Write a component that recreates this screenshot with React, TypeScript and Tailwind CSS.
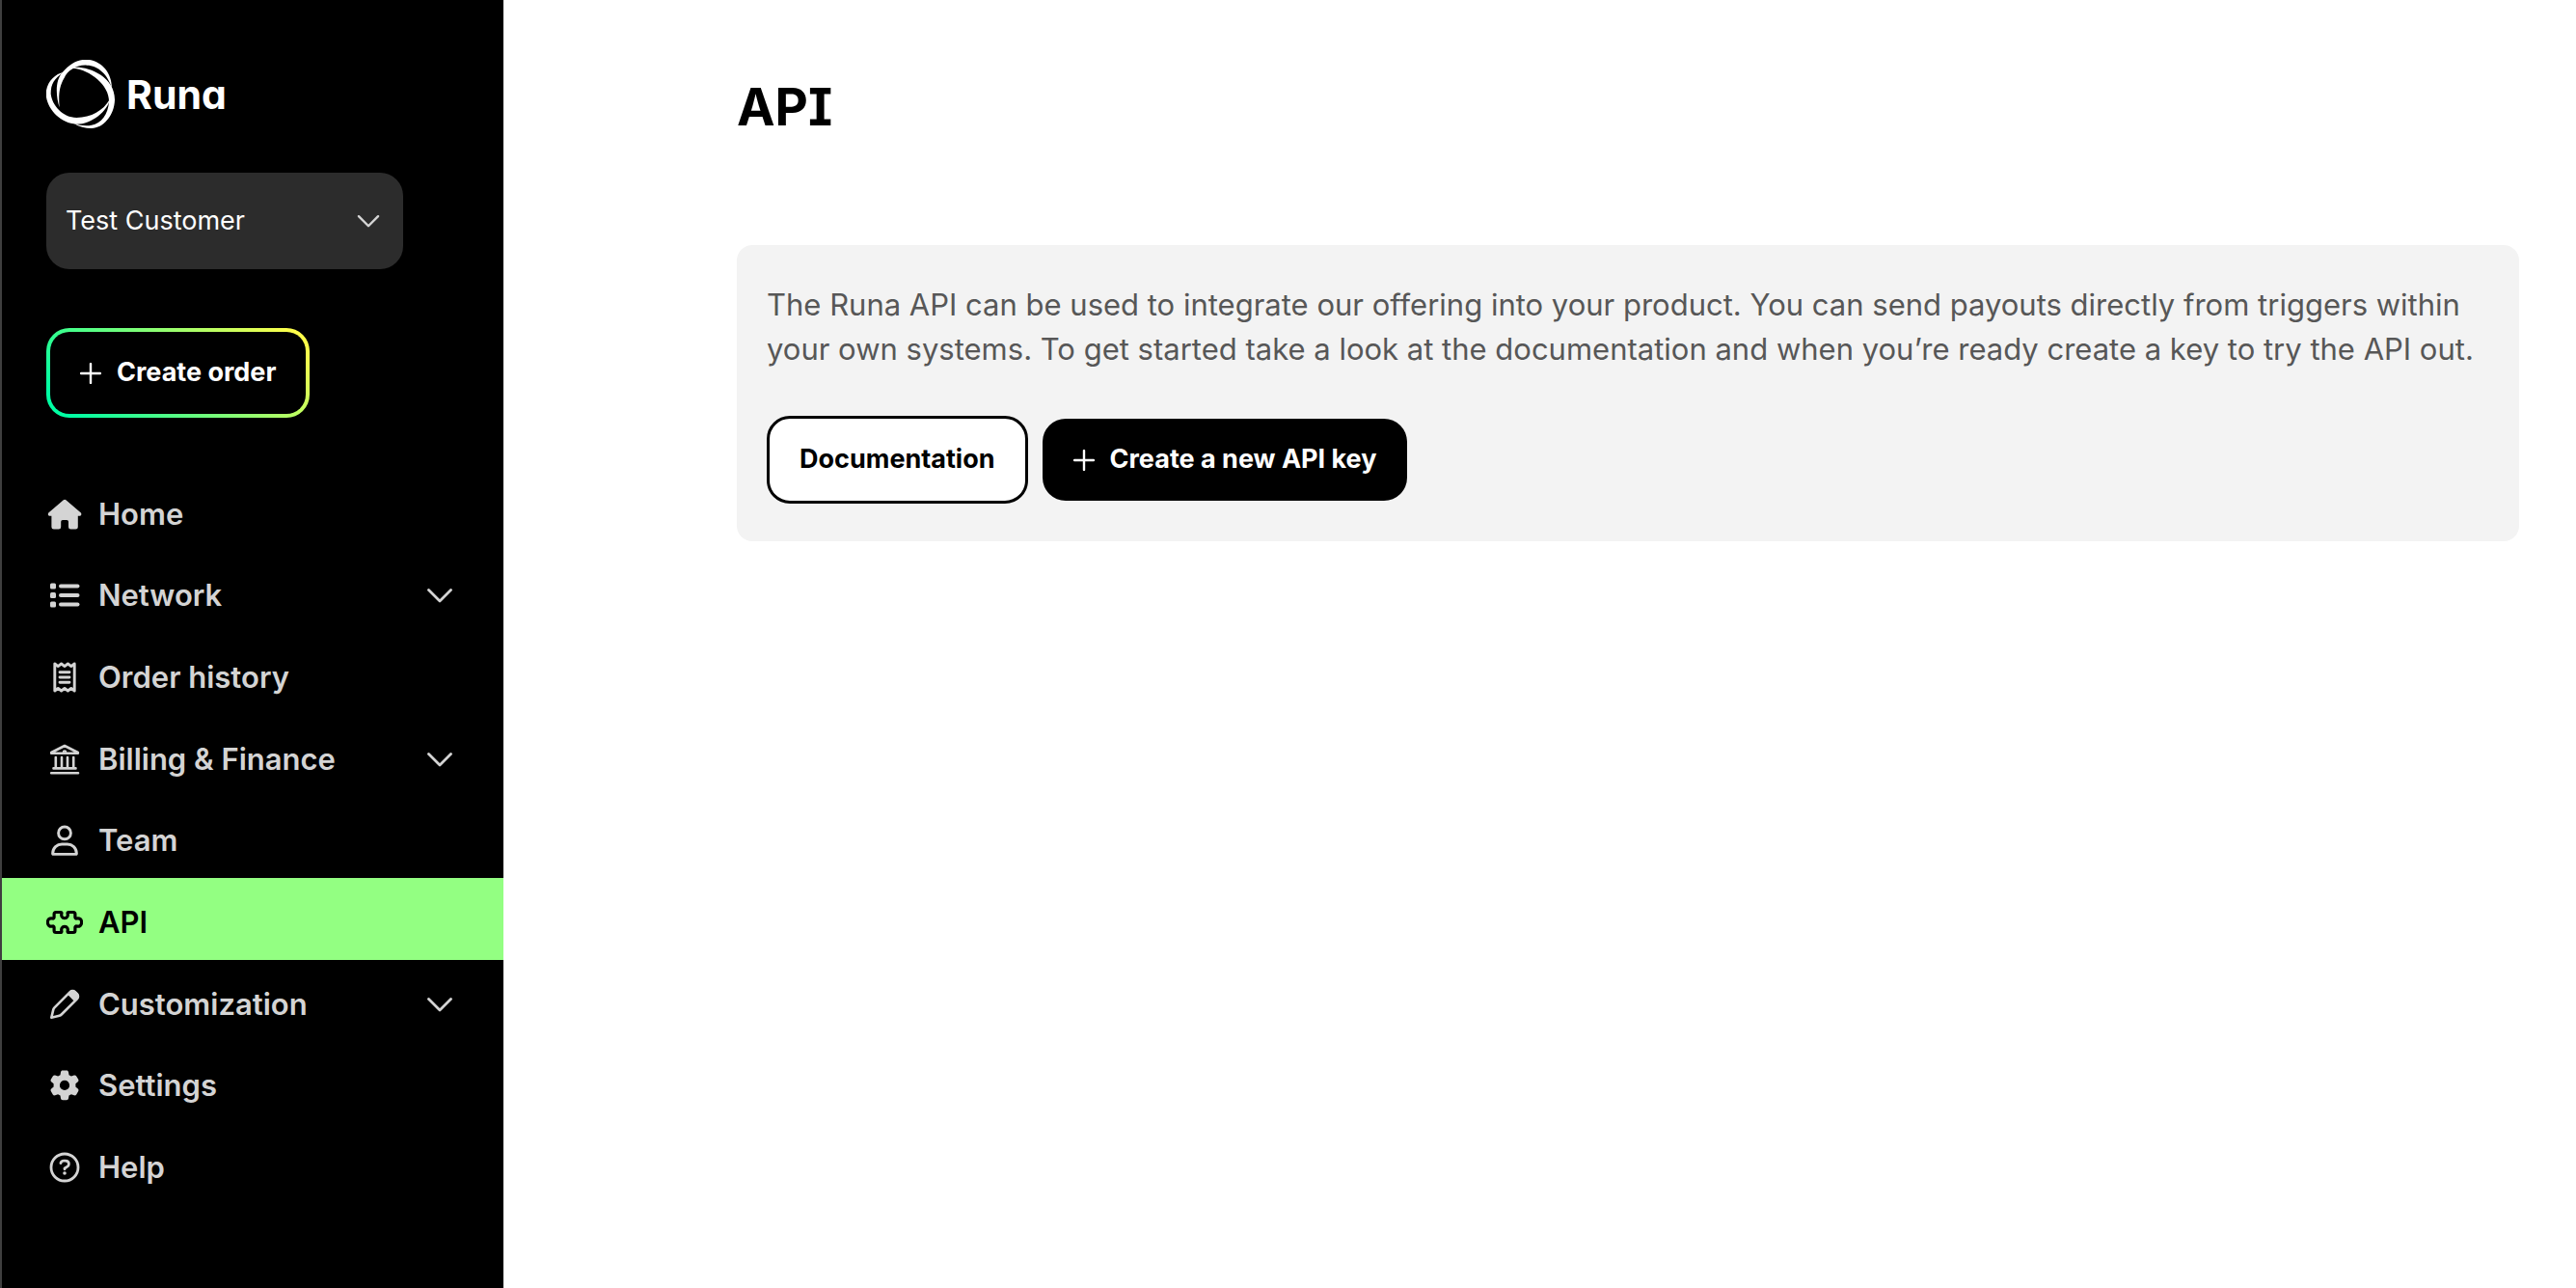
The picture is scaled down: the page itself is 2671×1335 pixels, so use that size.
import React from 'react';

type IconName =
  | 'home'
  | 'list'
  | 'receipt'
  | 'bank'
  | 'user'
  | 'puzzle'
  | 'pencil'
  | 'gear'
  | 'help';

const line = {
  fill: 'none',
  stroke: 'currentColor',
  strokeWidth: 2.6,
  strokeLinecap: 'round' as const,
  strokeLinejoin: 'round' as const,
};

const icons: Record<IconName, React.ReactNode> = {
  home: (
    <path
      fill="currentColor"
      d="M17.8 4.2a2 2 0 0 1 2.6 0L35.6 17.3c1.5 1.4.7 3.5-1.2 3.5h-1.6v11.4a2.4 2.4 0 0 1-2.4 2.4h-5a2.4 2.4 0 0 1-2.4-2.4v-5.4a1.8 1.8 0 0 0-1.8-1.8h-4.2a1.8 1.8 0 0 0-1.8 1.8v5.4a2.4 2.4 0 0 1-2.4 2.4h-5a2.4 2.4 0 0 1-2.4-2.4V20.800H3.800c-1.900 0-2.700-2.100-1.200-3.500z"
    />
  ),
  list: (
    <g fill="currentColor">
      <rect x="4" y="6.500" width="6" height="6" rx="1.500" />
      <rect x="4" y="16" width="6" height="6" rx="1.500" />
      <rect x="4" y="25.500" width="6" height="6" rx="1.500" />
      <rect x="13" y="7.500" width="21.500" height="4" rx="2" />
      <rect x="13" y="17" width="21.500" height="4" rx="2" />
      <rect x="13" y="26.500" width="21.500" height="4" rx="2" />
    </g>
  ),
  receipt: (
    <g {...line} strokeWidth={2.9}>
      <path d="M8.800 5v28l3.400-2.600 3.400 2.600L19 30.400l3.400 2.600 3.400-2.600 3.400 2.600V5l-3.400 2.600L22.400 5 19 7.600 15.600 5l-3.400 2.600z" />
      <path d="M14 13.800h10M14 19h10M14 24.200h10" />
    </g>
  ),
  bank: (
    <g {...line} strokeWidth={2.6}>
      <path d="M5.200 12.800v-.8L19 5l13.800 7v.8zM5.200 33.200h27.800M7.500 28.400h23M9.800 17v11M16 17v11M22 17v11M28.200 17v11" />
      <circle cx="19" cy="11.500" r="1" />
    </g>
  ),
  user: (
    <g {...line} strokeWidth={2.900}>
      <circle cx="19" cy="11.400" r="6.400" />
      <path d="M6.600 32.800c0-6 4.600-9.800 9.600-9.800h5.600c5 0 9.600 3.800 9.600 9.800a.6.6 0 0 1-.6.6H7.200a.6.6 0 0 1-.6-.6z" />
    </g>
  ),
  puzzle: (
    <path
      {...line}
      strokeWidth={3.200}
      d="M10 8.500h4.800c.8 0 1.300.6 1.100 1.300-.7 2.600.6 4.900 3.100 4.900s3.800-2.300 3.100-4.900c-.2-.7.300-1.300 1.100-1.300H28c1.100 0 1.900.8 1.900 1.900v3.400c0 .9.700 1.400 1.500 1.200 3.200-.8 5.200 1.100 5.200 4s-2 4.800-5.200 4c-.8-.2-1.500.3-1.500 1.200v3.400c0 1.100-.8 1.900-1.900 1.900h-4.800c-.8 0-1.300-.6-1.100-1.300.7-2.600-.6-4.900-3.100-4.900s-3.800 2.300-3.100 4.900c.2.700-.3 1.300-1.100 1.300H10c-1.100 0-1.900-.8-1.900-1.900v-3.400c0-.9-.7-1.400-1.500-1.200-3.200.8-5.200-1.100-5.200-4s2-4.800 5.200-4c.8.200 1.500-.3 1.500-1.200v-3.400c0-1.100.8-1.900 1.900-1.900z"
    />
  ),
  pencil: (
    <g>
      <path
        {...line}
        d="M5.300 32.700l2-8.300c.2-.8.600-1.500 1.200-2.100L24.700 6.100a3.600 3.600 0 0 1 5.100 0l2.100 2.100a3.600 3.600 0 0 1 0 5.100L15.700 29.500c-.6.6-1.300 1-2.100 1.200z"
      />
      <path
        fill="currentColor"
        d="M22 8.800l2.700-3.300a4.400 4.400 0 0 1 5.800 0l2 2a4.400 4.400 0 0 1 0 5.800l-3.300 2.700z"
      />
    </g>
  ),
  gear: (
    <path
      fill="currentColor"
      fillRule="evenodd"
      d="M17 3.600h4c1 0 1.800.6 2 1.600l.5 3 2.400 1.400 2.900-1.100c.9-.3 1.900 0 2.400.9l2 3.400c.5.900.3 1.900-.4 2.500L30.400 17.300v3.200l2.400 2c.7.600.9 1.700.4 2.500l-2 3.400c-.5.900-1.500 1.200-2.400.9l-2.900-1.100-2.400 1.400-.5 3c-.2 1-1 1.600-2 1.600h-4c-1 0-1.800-.6-2-1.600l-.5-3-2.400-1.400-2.900 1.100c-.9.300-1.900 0-2.400-.9l-2-3.400c-.5-.8-.3-1.900.4-2.500l2.400-2v-3.200l-2.400-2c-.7-.6-.9-1.600-.4-2.500l2-3.400c.5-.9 1.500-1.200 2.400-.9l2.900 1.100 2.400-1.400.5-3c.2-1 1-1.600 2-1.600zM19 13.800a5.100 5.100 0 1 0 0 10.200 5.100 5.100 0 0 0 0-10.200z"
    />
  ),
  help: (
    <g {...line} strokeWidth={2.800}>
      <circle cx="19" cy="19" r="14" />
      <path d="M14.900 14.600c.4-1.700 1.600-2.500 3.300-2.500h1.500c2.200 0 3.700 1.400 3.700 3.300 0 1.300-.7 2.300-1.900 3L19 20v.8" />
      <circle cx="19" cy="25" r="1.800" fill="currentColor" stroke="none" />
    </g>
  ),
};

function Icon({ name }: { name: IconName }) {
  return (
    <svg viewBox="0 0 38 38" className="size-[38px] shrink-0" aria-hidden="true">
      {icons[name]}
    </svg>
  );
}

function Chevron({ className }: { className: string }) {
  return (
    <svg viewBox="0 0 26 16" className={className} aria-hidden="true">
      <path
        d="M1.500 2.500L13 14 24.500 2.500"
        fill="none"
        stroke="currentColor"
        strokeWidth="2.800"
        strokeLinecap="round"
        strokeLinejoin="round"
      />
    </svg>
  );
}

function Plus() {
  return (
    <svg viewBox="0 0 22 22" className="size-[22px] shrink-0" aria-hidden="true">
      <path d="M11 1v20M1 11h20" stroke="currentColor" strokeWidth="2.400" strokeLinecap="round" />
    </svg>
  );
}

function Logo() {
  return (
    <a href="#" className="flex items-center gap-3 text-white">
      <svg viewBox="24 36 213 213" className="size-[71px]" fill="currentColor" aria-hidden="true">
        <path d="M65 184C54 150 50 100 75 74C100 45 125 35 150 35C195 38 228 75 228 125C216 82 185 53 150 53C118 51 90 70 80 92C63 120 62 150 65 184Z" />
        <path d="M108 60C150 55 237 85 237 160C236 210 200 249 165 249C145 249 125 244 110 234C130 241 150 242 165 239C195 234 217 205 219 165C220 115 160 67 108 62Z" />
        <path d="M78 74C48 95 38 110 38 142C42 178 75 216 118 216C165 214 200 195 222 158C215 195 165 236 118 236C65 233 23 185 23 140C25 105 50 80 78 74Z" />
      </svg>
      <span className="text-[41px] leading-[48px] font-bold [font-feature-settings:'cv11']">Runa</span>
    </a>
  );
}

const items: { label: string; icon: IconName; expandable?: boolean; active?: boolean }[] = [
  { label: 'Home', icon: 'home' },
  { label: 'Network', icon: 'list', expandable: true },
  { label: 'Order history', icon: 'receipt' },
  { label: 'Billing & Finance', icon: 'bank', expandable: true },
  { label: 'Team', icon: 'user' },
  { label: 'API', icon: 'puzzle', active: true },
  { label: 'Customization', icon: 'pencil', expandable: true },
  { label: 'Settings', icon: 'gear' },
  { label: 'Help', icon: 'help' },
];

function NavItem({ label, icon, expandable, active }: (typeof items)[number]) {
  const tone = active ? 'bg-[#93ff82] text-black' : 'text-[#d4d4d4]';
  const shared = `flex w-full items-center gap-4 pt-[7px] pl-[46px] pr-[53px] text-left text-[31px] leading-9 font-semibold ${tone}`;
  const body = (
    <>
      <Icon name={icon} />
      <span className="grow">{label}</span>
      {expandable && <Chevron className="h-4 w-[26px]" />}
    </>
  );
  return expandable ? (
    <button type="button" aria-expanded="false" className={shared}>
      {body}
    </button>
  ) : (
    <a href="#" aria-current={active ? 'page' : undefined} className={shared}>
      {body}
    </a>
  );
}

function Sidebar() {
  return (
    <aside className="w-[522px] shrink-0 border-l-2 border-[#3f3f3f] bg-black">
      <div className="flex flex-col items-start px-[46px] pt-[62px]">
        <Logo />
        <div className="relative mt-[46px] w-[370px]">
          <select
            aria-label="Customer"
            className="h-[100px] w-full appearance-none rounded-3xl bg-[#2c2c2c] px-5 text-[27px] text-white"
          >
            <option>Test Customer</option>
          </select>
          <Chevron className="pointer-events-none absolute top-[43px] right-6 h-3.5 w-6 text-[#d4d4d4]" />
        </div>
        <button
          type="button"
          className="mt-[61px] flex h-[93px] items-center rounded-3xl bg-linear-[45deg,#00ffa3_8%,#ffff4a_95%] p-1 text-[27px] font-bold text-white"
        >
          <span className="flex h-full items-center gap-4 rounded-[20px] bg-black px-[31px]">
            <Plus />
            Create order
          </span>
        </button>
      </div>
      <nav className="mt-[54px] grid h-[762px] auto-rows-fr">
        {items.map((item) => (
          <NavItem key={item.label} {...item} />
        ))}
      </nav>
    </aside>
  );
}

export default function App() {
  return (
    <div className="flex min-h-screen bg-white font-['Inter',sans-serif]">
      <Sidebar />
      <main className="min-w-0 grow pt-20 pr-[59px] pl-[242px]">
        <h1 className="text-[53px] leading-[62px] font-bold text-black [font-feature-settings:'ss02','cv08']">API</h1>
        <section className="mt-28 rounded-2xl bg-[#f3f3f3] px-[31px] py-[39px]">
          <p className="text-[31px] leading-[46px] text-[#575757]">
            The Runa API can be used to integrate our offering into your product. You can send payouts directly from
            triggers within your own systems. To get started take a look at the documentation and when you’re ready
            create a key to try the API out.
          </p>
          <div className="mt-[46px] flex items-center gap-[15px] text-[27px] font-bold">
            <a
              href="#"
              className="flex h-[91px] items-center rounded-3xl border-3 border-black bg-white px-[31px] text-black"
            >
              Documentation
            </a>
            <button type="button" className="flex h-[85px] items-center gap-4 rounded-3xl bg-black px-8 text-white">
              <Plus />
              Create a new API key
            </button>
          </div>
        </section>
      </main>
    </div>
  );
}
